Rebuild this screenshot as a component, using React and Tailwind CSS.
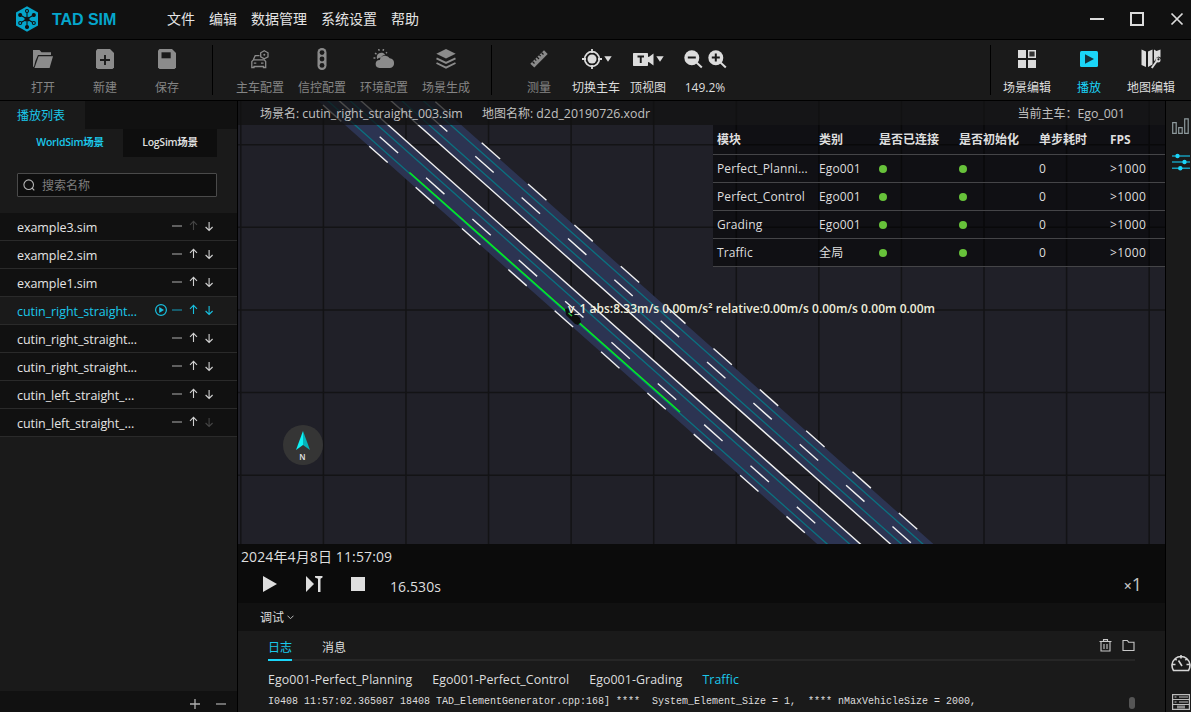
import React from "react";

const latin = "font-['Open_Sans','Noto_Sans_CJK_SC',sans-serif]";

/* ---------- toolbar icons ---------- */
const FolderIcon = () => (
  <svg width="20" height="20" viewBox="0 0 20 20" fill="#8b8b8b">
    <path d="M0 1h6.500l2 2.200H18V6H5L2.400 12 1 17.500 0 18z" />
    <path d="M5.600 7.200H20L16.600 19H1.500z" />
  </svg>
);
const NewIcon = () => (
  <svg width="18" height="20" viewBox="0 0 18 20">
    <path d="M0 1.500 1.500 0H14l4 4v14.500L16.500 20h-15L0 18.500z" fill="#8b8b8b" />
    <path d="M9 6v10M4 11h10" stroke="#1a1a1a" strokeWidth="1.900" />
  </svg>
);
const SaveIcon = () => (
  <svg width="18" height="20" viewBox="0 0 18 20">
    <path d="M0 1.500 1.500 0H14l4 4v14.500L16.500 20h-15L0 18.500z" fill="#8b8b8b" />
    <path d="M3.500 3.300h9.200v6H3.500z" fill="#1a1a1a" />
  </svg>
);
const CarConfigIcon = () => (
  <svg width="18" height="19" viewBox="0 0 18 19" fill="none" stroke="#8b8b8b" strokeWidth="1.300">
    <path d="M8.500 5.700H4.200L2.200 10M.8 17.500V11.500L2.500 9.800h10.800l1.400 1.700v6h-2.200v-1H3v1z" />
    <path d="M2.800 13.200h2.500M10 13.200h2.500" />
    <path d="m13.300.8 3.700 2v4l-3.700 2-3.600-2v-4z" />
    <circle cx="13.300" cy="4.800" r="1" fill="#8b8b8b" stroke="none" />
  </svg>
);
const SignalIcon = () => (
  <svg width="10" height="22" viewBox="0 0 10 22">
    <rect x=".5" width="9" height="22" rx="4.500" fill="#8b8b8b" />
    <g fill="#1a1a1a">
      <circle cx="5" cy="4.600" r="2.400" />
      <circle cx="5" cy="11" r="2.400" />
      <circle cx="5" cy="17.400" r="2.400" />
    </g>
  </svg>
);
const WeatherIcon = () => (
  <svg width="22" height="20" viewBox="0 0 22 20" fill="#8b8b8b">
    <path d="M4.300 10.200a4.200 4.200 0 1 1 7.800-4.200c-2 .2-3.500 1.200-4.200 2.700-1.600 0-2.600.4-3.600 1.500z" />
    <path d="M6.500 19a4 4 0 0 1 .3-8 5.400 5.400 0 0 1 9.900-1.700A4.900 4.900 0 0 1 17 19z" />
    <path d="M.5 9h1.900M2 4.200l1.500 1M5.600 0l.7 1.700M10.600.1 10 1.800M14 3.200l-1 .9" stroke="#8b8b8b" strokeWidth="1.500" />
  </svg>
);
const LayersIcon = () => (
  <svg width="20" height="20" viewBox="0 0 20 20">
    <path d="m10 0 9.700 4.700L10 9.400.3 4.700z" fill="#8b8b8b" />
    <path d="m.5 9.300 9.500 4.600 9.500-4.600M.5 14l9.500 4.700 9.500-4.700" fill="none" stroke="#8b8b8b" strokeWidth="1.900" />
  </svg>
);
const RulerIcon = () => (
  <svg width="20" height="20" viewBox="0 0 20 20">
    <path d="M15 1.300 18.700 5 5.300 18.600 1.300 14.800z" fill="#8b8b8b" />
    <path d="m3.500 12.500 2 2M5.800 10.200l1.500 1.500M8 8l2 2M10.200 5.700l1.500 1.500M12.500 3.500l2 2" stroke="#1a1a1a" strokeWidth="1.200" />
  </svg>
);
const Caret = () => (
  <svg width="8" height="6" viewBox="0 0 8 6"><path d="M.3.300h7.400L4 5.800z" fill="#dcdcdc" /></svg>
);
const TargetIcon = () => (
  <svg width="20" height="20" viewBox="0 0 20 20" fill="none" stroke="#dcdcdc">
    <circle cx="10" cy="10" r="7.300" strokeWidth="1.700" />
    <circle cx="10" cy="10" r="4.500" fill="#dcdcdc" stroke="none" />
    <path d="M10 0v4M10 16v4M0 10h4M16 10h4" strokeWidth="1.800" />
  </svg>
);
const CameraIcon = () => (
  <svg width="21" height="13" viewBox="0 0 21 13">
    <path d="M0 .5.500 0h13.800l.7.500V4l1.500-.5L20.500.500v12l-4-3L15 9v3.500l-.700.500H.500L0 12.500z" fill="#dcdcdc" />
    <path d="M4.500 3.500h6.500M7.750 3.500V10" stroke="#1a1a1a" strokeWidth="1.900" />
  </svg>
);
const Magnifier = ({ plus }) => (
  <svg width="19" height="19" viewBox="0 0 19 19">
    <circle cx="7.800" cy="7.800" r="7.500" fill="#dcdcdc" />
    <path d="m12.500 12.500 5.300 5" stroke="#dcdcdc" strokeWidth="2" />
    <path d={plus ? "M3.800 7.500h8M7.800 3.500v8" : "M3.800 7.500h8"} stroke="#1a1a1a" strokeWidth="2" />
  </svg>
);
const GridIcon = () => (
  <svg width="18" height="18" viewBox="0 0 18 18" fill="#dcdcdc">
    <path d="M0 0h8v8H0zM0 10h8v8H0zM10 10h8v8h-8z" />
    <path d="M10.700.700h6.600v6.600h-6.600z" fill="#333" stroke="#dcdcdc" strokeWidth="1.400" />
  </svg>
);
const PlayBoxIcon = () => (
  <svg width="18" height="16" viewBox="0 0 18 16">
    <rect width="18" height="16" rx="1.500" fill="#1bd5f8" />
    <path d="M5 3.200 14 8l-9 4.800z" fill="#16303a" />
  </svg>
);
const MapEditIcon = () => (
  <svg width="20" height="20" viewBox="0 0 20 20" fill="#dcdcdc">
    <path d="M.5.500 5 2.500V18L.5 16zM7 2.500 11.500.5V15.500L7 18zM13 .5l2.500 1.500 4-1.500V8.500l-2-.9-1.800.8-2.700 4.200z" />
    <path d="m10.800 19 5-7" stroke="#dcdcdc" strokeWidth="2" />
    <circle cx="17" cy="11" r="2.500" /><circle cx="17.500" cy="10.300" r="1.100" fill="#1a1a1a" />
  </svg>
);

const Tool = ({ icon, label, w = "w-[62px]", tone = "text-[#858585]" }) => (
  <div className={`${w} flex shrink-0 flex-col items-center`}>
    <div className="flex h-[24px] items-center justify-center">{icon}</div>
    <span className={`mt-[8px] whitespace-nowrap text-[12px] leading-[18px] ${tone}`}>{label}</span>
  </div>
);
const Divider = () => <div className="h-[50px] w-px shrink-0 self-start bg-black" />;

const Logo = () => (
  <svg width="24" height="26" viewBox="0 0 24 26">
    <path d="m12 .3 11 6.200v13L12 25.700 1 19.500v-13z" fill="#05a6cc" />
    <g stroke="#111" strokeWidth="1.100" fill="none">
      <path d="M12 6.500v4M12 15.500v4M6.500 9.800l3.500 2M14 14.200l3.500 2M17.500 9.800l-3.500 2M10 14.200l-3.500 2" />
      <circle cx="12" cy="5" r="1.500" /><circle cx="12" cy="21" r="1.500" fill="#111" />
      <circle cx="5.200" cy="9" r="1.500" fill="#111" /><circle cx="18.800" cy="9" r="1.500" fill="#111" />
      <circle cx="5.200" cy="17" r="1.500" /><circle cx="18.800" cy="17" r="1.500" />
      <circle cx="12" cy="13" r="2" fill="#111" />
    </g>
  </svg>
);

const Header = () => (
  <header className="flex h-[40px] shrink-0 items-center border-b border-black bg-[#111]">
    <div className="ml-[15px] flex w-[24px] pb-[1px]"><Logo /></div>
    <span className="ml-[13px] w-[115px] font-['Liberation_Sans',sans-serif] text-[16px] font-bold leading-none tracking-[-0.05px] text-[#05a6cc]">TAD SIM</span>
    <nav className="flex gap-[14px] pb-[2px] text-[14px] leading-[20px] text-[#e4e4e4]">
      {["文件", "编辑", "数据管理", "系统设置", "帮助"].map((m) => <span key={m}>{m}</span>)}
    </nav>
    <svg className="mb-[1px] ml-auto mr-[7px]" width="94" height="14" viewBox="0 0 94 14" fill="none" stroke="#dcdcdc" strokeWidth="2">
      <path d="M0 7h14" /><path d="M41 1h12v12H41z" /><path d="m81.500 1.500 11 11M92.500 1.500l-11 11" strokeWidth="1.700" />
    </svg>
  </header>
);

const Toolbar = () => (
  <div className="flex h-[61px] shrink-0 border-b border-black bg-[#1a1a1a] pt-[5px]">
    <div className="flex pl-[12px] pt-[2px]">
      <Tool icon={<FolderIcon />} label="打开" />
      <Tool icon={<NewIcon />} label="新建" />
      <Tool icon={<SaveIcon />} label="保存" />
    </div>
    <div className="ml-[14px] flex"><Divider /></div>
    <div className="flex pl-[16px] pt-[2px]">
      <Tool icon={<CarConfigIcon />} label="主车配置" />
      <Tool icon={<SignalIcon />} label="信控配置" />
      <Tool icon={<WeatherIcon />} label="环境配置" />
      <Tool icon={<LayersIcon />} label="场景生成" />
    </div>
    <div className="ml-[14px] flex"><Divider /></div>
    <div className="flex pl-[16px] pt-[2px]">
      <Tool icon={<RulerIcon />} label="测量" />
      <Tool w="w-[52px]" tone="text-[#dedede]" label="切换主车" icon={<div className="flex items-center gap-[2px] pl-[2px]"><TargetIcon /><Caret /></div>} />
      <Tool w="w-[52px]" tone="text-[#dedede]" label="顶视图" icon={<div className="flex items-center gap-[2px] pl-[1px]"><CameraIcon /><Caret /></div>} />
      <Tool tone="text-[#dedede]" label="149.2%" icon={<div className="flex items-center gap-[5px]"><Magnifier /><Magnifier plus /></div>} />
    </div>
    <div className="ml-auto flex"><Divider /></div>
    <div className="flex pl-[5px] pr-[9px] pt-[2px]">
      <Tool tone="text-[#dedede]" icon={<GridIcon />} label="场景编辑" />
      <Tool tone="text-[#1bd5f8]" icon={<PlayBoxIcon />} label="播放" />
      <Tool tone="text-[#dedede]" icon={<MapEditIcon />} label="地图编辑" />
    </div>
  </div>
);

/* ---------- sidebar ---------- */
const rows = [
  { name: "example3.sim", up: false },
  { name: "example2.sim" },
  { name: "example1.sim" },
  { name: "cutin_right_straight...", active: true },
  { name: "cutin_right_straight..." },
  { name: "cutin_right_straight..." },
  { name: "cutin_left_straight_..." },
  { name: "cutin_left_straight_...", down: false },
];
const Row = ({ name, active, up = true, down = true }) => {
  const c = active ? "#18bfdf" : "#d0d0d0";
  return (
    <div className={`flex h-[28px] items-center border-b border-[#2a2a2a] pl-[17px] ${active ? "bg-[#1a1a1a] text-[#1bc8ea]" : "bg-[#111] text-[#e4e4e4]"}`}>
      <span className="w-[137px] whitespace-nowrap pt-[3px] text-[12.500px] leading-[20px] tracking-[-0.060px]">{name}</span>
      <svg className="mb-[1px]" width="62" height="14" viewBox="0 0 62 14" fill="none">
        {active && <g><circle cx="7" cy="7" r="5.400" stroke={c} strokeWidth="1.200" /><path d="M5.200 4 10 7l-4.800 3z" fill={c} /></g>}
        <path d="M18 7h10" stroke={active ? "#17677a" : "#6e6e6e"} strokeWidth="1.700" />
        <path d="M39.500 11V2.500M36 5.800l3.500-3.500L43 5.800" stroke={up ? c : "#444"} strokeWidth="1.100" />
        <path d="M55.100 3v8.500M51.600 8l3.500 3.500L58.600 8" stroke={down ? c : "#444"} strokeWidth="1.100" />
      </svg>
    </div>
  );
};

const Sidebar = () => (
  <aside className="flex w-[238px] shrink-0 flex-col border-r border-black bg-[#1a1a1a]">
    <div className="flex h-[28px] shrink-0 bg-[#111]">
      <div className="w-[85px] bg-[#1a1a1a] pl-[17px] pt-[5px] text-[12px] leading-[20px] text-[#1bc8ea]">播放列表</div>
    </div>
    <div className="flex h-[28px] shrink-0 pl-[17px] text-[10.500px] font-semibold leading-[26px] tracking-[-0.25px]">
      <div className="w-[106px] text-center text-[#1bc8ea]">WorldSim场景</div>
      <div className="w-[94px] bg-[#0e0e0e] text-center text-[#dedede]">LogSim场景</div>
    </div>
    <div className="mx-[17px] mt-[16px] flex h-[24px] w-[200px] shrink-0 items-center rounded-[1px] border border-[#4a4a4a] bg-[#0e0e0e] pl-[5px] text-[12px] text-[#7d7d7d]">
      <svg width="12" height="12" viewBox="0 0 12 12" fill="none" stroke="#b5b5b5" strokeWidth="1.100"><circle cx="5.700" cy="5.700" r="4.800" /><path d="m9 9 2.300 2.300" /></svg>
      <span className="ml-[7px] pt-[1px] leading-[20px]">搜索名称</span>
    </div>
    <div className="mt-[16px]">{rows.map((r, i) => <Row key={i} {...r} />)}</div>
    <div className="mt-auto flex h-[21px] shrink-0 items-center bg-[#111] pl-[190px] pt-[5px]">
      <svg width="36" height="10" viewBox="0 0 36 10" fill="none"><path d="M0 5h10M5 0v10" stroke="#b0b0b0" strokeWidth="1.300" /><path d="M26 5h10" stroke="#6e6e6e" strokeWidth="2" /></svg>
    </div>
  </aside>
);

/* ---------- map scene ---------- */
const gridX = Array.from({ length: 12 }, (_, i) => 240.800 + i * 82.580);
const gridY = [144.7, 227.300, 310, 392.600, 475.200];
const STEP_X = 46.350;
const STEP_Y = 41.130;
const dashSeries = [[369.300, 146.200], [379.700, 136.700], [475.300, 156.300], [481.700, 142.800]];
const dashIdx = Array.from({ length: 12 }, (_, i) => i - 2);
const full = (x) => `M${x - 33.800} 95 L${x + 472.700} 544.500`;

const Scene = () => (
  <svg className="block" width="927" height="443" viewBox="238 101 927 443">
    <rect x="238" y="101" width="927" height="443" fill="#202028" />
    <g stroke="#131315" strokeWidth="1.500">
      {gridX.map((x) => <path key={x} d={`M${x} 101V544`} />)}
      {gridY.map((y) => <path key={y} d={`M238 ${y}H1165`} />)}
    </g>
    <path d="M311.200 95H354.200L860.700 544.500H817.700z M384.500 95H427.500L934 544.500H891z" fill="#2c3452" />
    <g fill="none" stroke="#0a7280" strokeWidth="1.300">
      {[355, 377.400, 429.200, 450.700].map((x) => <path key={x} d={full(x)} />)}
    </g>
    <g fill="none" stroke="#f2f2f2" strokeWidth="1.400">
      {[388.200, 418.300].map((x) => <path key={x} d={full(x)} />)}
      {dashSeries.flatMap(([x, y], s) => dashIdx.map((n) => (
        <path key={`${s}:${n}`} d={`M${x + n * STEP_X} ${y + n * STEP_Y}l18.400 16.300`} />
      )))}
    </g>
    <path d="M409.500 172.500 680 412" stroke="#04f01f" strokeWidth="1.600" />
    <g>
      <path d="m565 309 4-1 11 10 1 4-3 3-3-1-9-9z" fill="#0c0f0e" />
      <path d="m568.500 313 3.500 3" stroke="#29c93c" strokeWidth="1.500" />
    </g>
    <circle cx="303" cy="445" r="20" fill="#353535" />
    <path d="m303 431-7 19 7-5z" fill="#0ff3f5" />
    <path d="m303 431 7 19-7-5z" fill="#04b3ba" />
    <text x="302.500" y="459.500" textAnchor="middle" fontSize="8" fontWeight="600" fill="#e6e6e6" className={latin}>N</text>
  </svg>
);

const modules = [
  ["Perfect_Planni...", "Ego001"],
  ["Perfect_Control", "Ego001"],
  ["Grading", "Ego001"],
  ["Traffic", "全局"],
];
const cols = "grid grid-cols-[102px_60px_80px_80px_71px_55px] pl-[4px]";
const Dot = () => <span className="h-[8px] w-[8px] rounded-full bg-[#67c23a]" />;

const MapView = () => (
  <div className="relative h-[443px] shrink-0 overflow-hidden">
    <Scene />
    <div className="absolute inset-x-0 top-0 flex h-[24px] bg-[#111]/75 pl-[22px] pr-[40px] pt-[1px] text-[12.350px] leading-[24px] text-[#c0c0c0]">
      <span className="w-[222px] whitespace-nowrap"><span className="text-[12px]">场景名: </span>cutin_right_straight_003.sim</span>
      <span className="whitespace-nowrap"><span className="text-[12px]">地图名称: </span>d2d_20190726.xodr</span>
      <span className="ml-auto whitespace-nowrap"><span className="text-[12px]">当前主车：</span>Ego_001</span>
    </div>
    <div className="absolute left-[475px] top-[24px] w-[452px] bg-black/50 text-[12px] text-[#dedede]">
      <div className={`${cols} h-[30px] items-center border-b border-[#454548] text-[12px] font-bold`}>
        {["模块", "类别", "是否已连接", "是否初始化", "单步耗时", "FPS"].map((h) => <span key={h} className="whitespace-nowrap">{h}</span>)}
      </div>
      {modules.map(([n, t]) => (
        <div key={n} className={`${cols} h-[28px] items-center border-b border-[#454548]`}>
          <span className="whitespace-nowrap tracking-[0.1px]">{n}</span><span className="tracking-[0.15px]">{t}</span><Dot /><Dot /><span>0</span><span className="tracking-[0.4px]">&gt;1000</span>
        </div>
      ))}
    </div>
    <span className="absolute left-[330px] top-[199px] whitespace-nowrap text-[12px] font-semibold leading-[18px] tracking-[0.015px] text-[#eeeedc]">v_1 abs:8.33m/s 0.00m/s² relative:0.00m/s 0.00m/s 0.00m 0.00m</span>
  </div>
);

/* ---------- playback and log ---------- */
const Playback = () => (
  <div className="h-[59px] shrink-0 bg-[#0b0b0b] text-[#dedede]">
    <div className="pl-[3px] pt-[3px] text-[14px] leading-[20px] tracking-[0.12px]">2024年4月8日 11:57:09</div>
    <div className="flex h-[36px] items-center pl-[25px] pr-[23px]">
      <svg className="mb-[3px]" width="104" height="18" viewBox="0 0 104 18" fill="#dedede">
        <path d="M0 1v16l14-8zM43 1v16l8-8zM52 1h7.500v1.500l-2 1.200V17h-2.500V3.700l-3-1.200zM88 2h14v14H88z" />
      </svg>
      <span className="ml-[23px] pt-[4px] text-[14px] leading-[20px] tracking-[0.1px]">16.530s</span>
      <span className="ml-auto pb-[1px] text-[#c4c4c4]"><span className="text-[14px] font-semibold">×</span><span className="text-[18px]">1</span></span>
    </div>
  </div>
);

const LogPanel = () => (
  <>
    <div className="flex h-[28px] shrink-0 items-center bg-[#111] pl-[22px] pt-[1px] text-[12px] text-[#dedede]">
      调试
      <svg className="ml-[3px]" width="7" height="5" viewBox="0 0 7 5" fill="none" stroke="#bbb"><path d="m.5.700 3 3 3-3" /></svg>
    </div>
    <div className="flex flex-1 flex-col overflow-hidden bg-[#1a1a1a] pl-[30px] pr-[30px] text-[#dedede]">
      <div className="flex h-[30px] shrink-0 border-b-2 border-[#262626] text-[12px] leading-[33px]">
        <span className="h-[30px] w-[24px] border-b-2 border-[#1bd5f8] text-[#1bc8ea]">日志</span>
        <span className="ml-[30px]">消息</span>
        <svg className="ml-auto mt-[8px]" width="36" height="13" viewBox="0 0 36 13" fill="none" stroke="#c8c8c8" strokeWidth="1.100">
          <path d="M.5 2.500h12M4.500 2.500V.6h4v1.900M2 2.500v9.500h9V2.500M5 5v5M8 5v5" />
          <path d="M24 1.500h4.300l1.300 1.700h5.400v8.300H24z" />
        </svg>
      </div>
      <div className="mt-[9px] flex h-[20px] shrink-0 gap-[20px] whitespace-nowrap text-[12.400px] leading-[20px] tracking-[0.062px]">
        <span>Ego001-Perfect_Planning</span>
        <span>Ego001-Perfect_Control</span>
        <span>Ego001-Grading</span>
        <span className="text-[#1bc8ea]">Traffic</span>
      </div>
      <div className="mt-[5px] flex h-[17px] shrink-0">
        <pre className="font-['Liberation_Mono',monospace] text-[10px] leading-[14px]">{"I0408 11:57:02.365087 18408 TAD_ElementGenerator.cpp:168] ****  System_Element_Size = 1,  **** nMaxVehicleSize = 2000,"}</pre>
        <div className="ml-auto mt-[2px] h-[12px] w-[6px] rounded-full bg-[#555]" />
      </div>
    </div>
  </>
);

const Rail = () => (
  <aside className="flex w-[26px] shrink-0 flex-col border-l border-black bg-[#1a1a1a] pl-[5px] pt-[17px]">
    <svg width="20" height="17" viewBox="0 0 20 17" fill="none" stroke="#8e9a9d" strokeWidth="1.200"><path d="M1.700 4.700h3.500v10.700H1.700zM7.700 9.700h3.500v5.700H7.700zM13.700.8h3.500v14.600h-3.500z" /></svg>
    <svg className="mt-[18px]" width="20" height="18" viewBox="0 0 20 18"><path d="M1 3h18M1 9h18M1 15.200h18" stroke="#169bb8" strokeWidth="1.600" /><g fill="#1bd5f8"><circle cx="6.500" cy="3" r="2.200" /><circle cx="13.500" cy="9" r="2.200" /><circle cx="9.300" cy="15.200" r="2.200" /></g></svg>
    <svg className="mt-auto" width="20" height="18" viewBox="0 0 20 18" fill="none" stroke="#d6d6d6" strokeWidth="1.600">
      <path d="M2.500 16.500A9 9 0 1 1 17.500 16.500zM10 1v3.500M3.600 4.200l2 2M16.400 4.200l-2 2M1 10.500h3.500M15.500 10.500H19M7.500 6.500l3.500 5.500" />
    </svg>
    <svg className="mb-[2px] mt-[22px]" width="20" height="16" viewBox="0 0 20 16" fill="none" stroke="#bdbdbd" strokeWidth="1.200">
      <path d="M1.600.6h16.800v14.800H1.600zM1.600 5.500h16.800M1.600 10.500h16.800M3.500 3h2M8 3h9M3.500 8h2M8 8h9" /><path d="M6 13h8" stroke="#8a8a8a" strokeWidth="3" />
    </svg>
  </aside>
);

export default function App() {
  return (
    <div className={`flex h-[712px] w-[1191px] flex-col overflow-hidden bg-[#1a1a1a] ${latin}`}>
      <Header />
      <Toolbar />
      <div className="flex min-h-0 flex-1">
        <Sidebar />
        <main className="flex min-w-0 flex-1 flex-col">
          <MapView />
          <Playback />
          <LogPanel />
        </main>
        <Rail />
      </div>
    </div>
  );
}
